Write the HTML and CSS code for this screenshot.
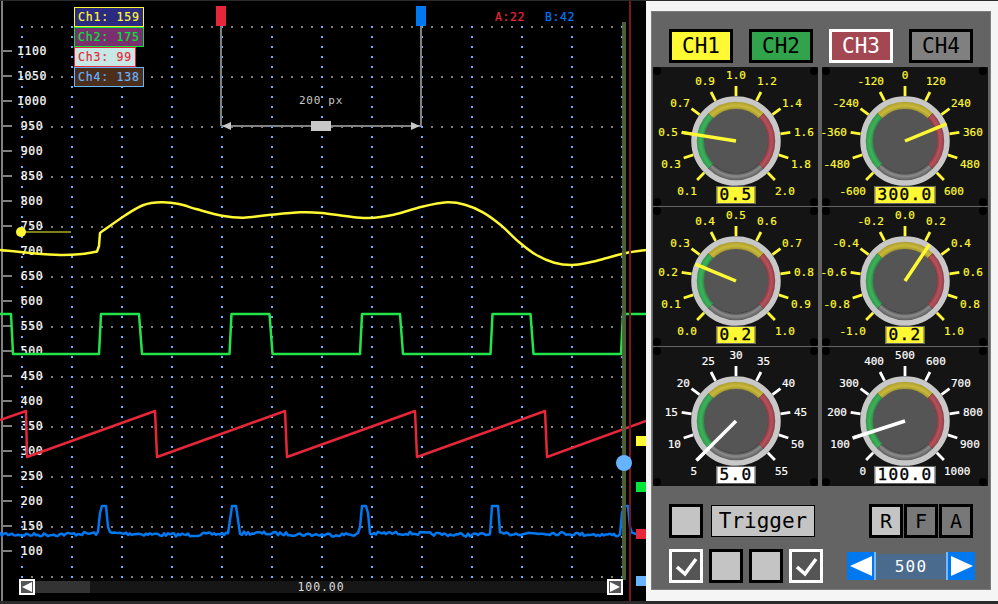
FILE: index.html
```html
<!DOCTYPE html>
<html lang="en">

<head>
    <meta charset="UTF-8">
    <title>Scope</title>
    <link rel="stylesheet" href="styles.css">
</head>

<body>
    <div class="app">
        <div class="scope">
            <svg id="plot" class="plot" viewBox="0 1 646 600" width="646" height="600"></svg>

            <div class="legend">
                <div class="legend-row ch1">Ch1: 159</div>
                <div class="legend-row ch2">Ch2: 175</div>
                <div class="legend-row ch3">Ch3: 99</div>
                <div class="legend-row ch4">Ch4: 138</div>
            </div>

            <div class="scrollbar">
                <button class="scroll-btn"><span class="tri-left"></span></button>
                <div class="scroll-track">
                    <div class="scroll-thumb"></div>
                    <span class="scroll-label">100.00</span>
                </div>
                <button class="scroll-btn"><span class="tri-right"></span></button>
            </div>
        </div>

        <div class="side">
            <div class="panel">
                <div class="channels">
                    <button class="ch-btn ch-yellow">CH1</button>
                    <button class="ch-btn ch-green">CH2</button>
                    <button class="ch-btn ch-red">CH3</button>
                    <button class="ch-btn ch-gray">CH4</button>
                </div>

                <div id="dials" class="dials"></div>

                <div class="controls">
                    <div class="control-row">
                        <button class="square"></button>
                        <button class="trigger">Trigger</button>
                        <div class="modes">
                            <button class="square mode">R</button>
                            <button class="square mode mode-off">F</button>
                            <button class="square mode mode-off">A</button>
                        </div>
                    </div>
                    <div class="control-row">
                        <div class="checks">
                            <button class="square checked">
                                <svg width="28" height="28"><polyline points="5,15 13,22 24,7" /></svg>
                            </button>
                            <button class="square"></button>
                            <button class="square"></button>
                            <button class="square checked">
                                <svg width="28" height="28"><polyline points="5,15 13,22 24,7" /></svg>
                            </button>
                        </div>
                        <div class="spinner">
                            <button class="spin-btn spin-prev"><span class="spin-left"></span></button>
                            <div class="spin-value">500</div>
                            <button class="spin-btn spin-next"><span class="spin-right"></span></button>
                        </div>
                    </div>
                </div>
            </div>
        </div>
    </div>
    <script src="script.js"></script>
</body>

</html>
```

FILE: styles.css
```css
/* Reset default margin and padding */
* {
    margin: 0;
    padding: 0;
    box-sizing: border-box;
}

body {
    width: 998px;
    height: 604px;
    overflow: hidden;
    background-color: #2b2b2b;
    font-family: "DejaVu Sans Mono", "Liberation Mono", monospace;
}

button {
    font-family: inherit;
}

.app {
    display: flex;
    height: 600px;
    margin-top: 1px;
}

/* Left side: the plot */
.scope {
    position: relative;
    width: 646px;
    background-color: #000;
}

.plot {
    display: block;
}

.plot text {
    font-family: "DejaVu Sans Mono", "Liberation Mono", monospace;
}

.axis-label {
    font-size: 11.5px;
    letter-spacing: 0.6px;
    fill: #fff;
    stroke: #fff;
    stroke-width: 0.2px;
}

.cursor-label {
    font-size: 11px;
    letter-spacing: 0.7px;
    fill: #c8c8c8;
}

.cursor-a {
    font-size: 11.5px;
    letter-spacing: 0.6px;
    fill: #e6273a;
    stroke: #e6273a;
    stroke-width: 0.2px;
}

.cursor-b {
    font-size: 11.5px;
    letter-spacing: 0.6px;
    fill: #0078f0;
    stroke: #0078f0;
    stroke-width: 0.2px;
}

.legend {
    position: absolute;
    left: 74px;
    top: 6px;
    display: flex;
    flex-direction: column;
    align-items: flex-start;
}

.legend-row {
    height: 20px;
    padding: 0 2px 0 3px;
    border: 1px solid;
    font-size: 11.5px;
    letter-spacing: 0.8px;
    line-height: 18px;
    white-space: pre;
    -webkit-text-stroke: 0.2px;
}

.ch1 {
    width: 70px;
    color: #fff933;
    border-color: #fff933;
    background-color: #2a2a80;
}

.ch2 {
    width: 70px;
    color: #00e639;
    border-color: #00e639;
    background-color: #7a2f6f;
}

.ch3 {
    width: 62px;
    color: #e6273a;
    border-color: #e6273a;
    background-color: #c8e8e6;
}

.ch4 {
    width: 70px;
    color: #66b3ff;
    border-color: #66b3ff;
    background-color: #4d2e1a;
}

.scrollbar {
    position: absolute;
    left: 19px;
    top: 578px;
    width: 604px;
    height: 16px;
    display: flex;
    align-items: center;
}

.scroll-btn {
    width: 16px;
    height: 16px;
    border: 2px solid #fff;
    background-color: #555;
    display: flex;
    align-items: center;
    justify-content: center;
    flex-shrink: 0;
}

.tri-left {
    border-top: 5px solid transparent;
    border-bottom: 5px solid transparent;
    border-right: 10px solid #fff;
}

.tri-right {
    border-top: 5px solid transparent;
    border-bottom: 5px solid transparent;
    border-left: 10px solid #fff;
}

.scroll-track {
    position: relative;
    flex: 1;
    height: 12px;
    background-color: #161616;
    display: flex;
    align-items: center;
    justify-content: center;
}

.scroll-thumb {
    position: absolute;
    left: 0;
    top: 0;
    width: 55px;
    height: 12px;
    background-color: #333;
}

.scroll-label {
    font-size: 11.5px;
    letter-spacing: 0.9px;
    color: #ddd;
}

/* Right side: the control panel */
.side {
    width: 352px;
    padding: 10px 7px 11px 5px;
    background-color: #f5f5f5;
}

.panel {
    height: 579px;
    border: 1px solid #7d7d7d;
    background-color: #646464;
}

.channels {
    display: flex;
    gap: 16px;
    padding: 17px 0 0 17px;
}

.ch-btn {
    width: 64px;
    height: 34px;
    border: 3px solid #000;
    font-size: 21px;
    color: #000;
}

.ch-yellow {
    background-color: #fff933;
}

.ch-green {
    background-color: #31a34a;
}

.ch-red {
    background-color: #a34852;
    border-color: #fff;
    color: #fff;
}

.ch-gray {
    background-color: #808080;
}

.dials {
    display: grid;
    grid-template-columns: 165px 166px;
    grid-auto-rows: 139px;
    column-gap: 4px;
    row-gap: 1px;
    margin: 4px 0 0 1px;
}

.dial {
    position: relative;
    background-color: #141414;
    overflow: hidden;
}

.dial svg {
    display: block;
}

.dial text {
    font-family: "DejaVu Sans Mono", "Liberation Mono", monospace;
    font-size: 11px;
    stroke-width: 0.2px;
}

.dial-value {
    position: absolute;
    left: 83px;
    bottom: 2px;
    transform: translateX(-50%);
    height: 18px;
    padding: 0 2px;
    border: 1px solid #666;
    font-size: 16px;
    letter-spacing: 1.4px;
    line-height: 16px;
    color: #000;
    white-space: nowrap;
    -webkit-text-stroke: 0.4px #000;
}

.dial-value.yellow {
    background-color: #fff933;
}

.dial-value.white {
    background-color: #fff;
}

.controls {
    display: flex;
    flex-direction: column;
    gap: 11px;
    margin-top: 18px;
    padding: 0 17px;
}

.control-row {
    display: flex;
    align-items: center;
    justify-content: space-between;
    height: 34px;
}

.control-row > .square {
    margin-right: 8px;
}

.square {
    width: 34px;
    height: 34px;
    border: 3px solid #000;
    background-color: #c4c4c4;
    flex-shrink: 0;
}

.trigger {
    width: 104px;
    height: 32px;
    border: 1px solid #000;
    background-color: #c4c4c4;
    font-size: 21px;
    color: #000;
    margin-right: auto;
}

.modes {
    display: flex;
    gap: 1px;
}

.mode {
    font-size: 20px;
    color: #000;
    line-height: 1;
}

.mode-off {
    background-color: #787878;
}

.checks {
    display: flex;
    gap: 6px;
}

.checked {
    border-color: #fff;
    background-color: #555;
}

.checked svg {
    display: block;
}

.checked polyline {
    fill: none;
    stroke: #fff;
    stroke-width: 3.5;
}

.spinner {
    display: flex;
    align-items: center;
    margin-right: -2px;
}

.spin-btn {
    width: 29px;
    height: 28px;
    border: none;
    background-color: #0078f0;
    display: flex;
    align-items: center;
    justify-content: center;
}

.spin-prev {
    border-right: 2px solid #7ab8f5;
}

.spin-next {
    border-left: 2px solid #7ab8f5;
}

.spin-left {
    border-top: 10px solid transparent;
    border-bottom: 10px solid transparent;
    border-right: 22px solid #fff;
}

.spin-right {
    border-top: 10px solid transparent;
    border-bottom: 10px solid transparent;
    border-left: 22px solid #fff;
}

.spin-value {
    width: 70px;
    height: 25px;
    background-color: #4a6a8e;
    font-size: 16px;
    letter-spacing: 1.2px;
    line-height: 25px;
    text-align: center;
    color: #fff;
}
```

FILE: script.js
```js
var NS = "http://www.w3.org/2000/svg";

function el(parent, name, attrs, text) {
    var node = document.createElementNS(NS, name);
    for (var key in attrs) node.setAttribute(key, attrs[key]);
    if (text !== undefined) node.textContent = text;
    parent.appendChild(node);
    return node;
}

// catmull-rom through the points, returned as path commands
function smooth(pts) {
    var d = "";
    for (var i = 0; i < pts.length - 1; i++) {
        var p0 = pts[Math.max(i - 1, 0)], p1 = pts[i];
        var p2 = pts[i + 1], p3 = pts[Math.min(i + 2, pts.length - 1)];
        d += " C" + (p1[0] + (p2[0] - p0[0]) / 6) + "," + (p1[1] + (p2[1] - p0[1]) / 6) +
            " " + (p2[0] - (p3[0] - p1[0]) / 6) + "," + (p2[1] - (p3[1] - p1[1]) / 6) +
            " " + p2[0] + "," + p2[1];
    }
    return d;
}

function drawGrid(svg) {
    var g = el(svg, "g", { "stroke-width": 2, "stroke-dasharray": "2 8" });
    for (var y = 27; y <= 577; y += 50) {
        el(g, "line", { x1: 21, x2: 614, y1: y, y2: y, stroke: "#808080" });
    }
    for (var x = 22; x <= 622; x += 50) {
        el(g, "line", { x1: x, x2: x, y1: 26, y2: 579, stroke: "#66b3ff" });
    }
}

function drawAxis(svg) {
    el(svg, "rect", { x: 1, y: 1, width: 2, height: 600, fill: "#808080" });
    for (var v = 1100, y = 51; v >= 100; v -= 50, y += 25) {
        el(svg, "rect", { x: 2, y: y - 1, width: 10, height: 2, fill: "#808080" });
        el(svg, "text", { x: 32, y: y + 4, "text-anchor": "middle", "class": "axis-label" }, v);
    }
}

function drawCursors(svg) {
    el(svg, "rect", { x: 220, y: 26, width: 2, height: 100, fill: "#808080" });
    el(svg, "rect", { x: 420, y: 26, width: 2, height: 100, fill: "#808080" });
    el(svg, "rect", { x: 216, y: 6, width: 10, height: 20, fill: "#e6273a" });
    el(svg, "rect", { x: 416, y: 6, width: 10, height: 20, fill: "#0078f0" });
    el(svg, "rect", { x: 221, y: 125, width: 200, height: 2, fill: "#808080" });
    el(svg, "polygon", { points: "222,126 231,122 231,130", fill: "#c8c8c8" });
    el(svg, "polygon", { points: "420,126 411,122 411,130", fill: "#c8c8c8" });
    el(svg, "rect", { x: 311, y: 121, width: 20, height: 10, fill: "#c8c8c8" });
    el(svg, "text", { x: 321, y: 104, "text-anchor": "middle", "class": "cursor-label" }, "200 px");
    el(svg, "text", { x: 495, y: 21, "class": "cursor-a" }, "A:22");
    el(svg, "text", { x: 545, y: 21, "class": "cursor-b" }, "B:42");
}

function drawTraces(svg) {
    var line = { fill: "none", "stroke-width": 2.5, "stroke-linejoin": "round" };

    // channel 1
    var left = [[0, 250], [30, 253], [60, 255], [82, 254], [97, 251.5]];
    var right = [[100, 233], [125.7, 215], [143.6, 205], [161.4, 202.3], [179, 204], [197, 209.3],
        [222, 215.7], [243.6, 217.7], [268.6, 215], [300.7, 212.3], [322, 213], [347, 216.3],
        [368.6, 218], [393.6, 214.7], [422, 206.7], [447, 202.3], [465, 204.7], [482.9, 212.3],
        [500.7, 225], [518.6, 241.7], [536.4, 255], [554.3, 262.7], [572, 265], [590, 262.3],
        [607.9, 257.7], [625.7, 253], [646, 250]];
    el(svg, "path", Object.assign({
        d: "M0,250" + smooth(left) + " L99,246 L100,233" + smooth(right),
        stroke: "#fff933"
    }, line));

    // channel 2, square wave
    var d2 = "M0,314 L11,314 L13,354";
    for (var x = 99; x < 646; x += 130.5) {
        d2 += " L" + x + ",354 L" + (x + 2) + ",314 L" + (x + 40) + ",314 L" + (x + 43) + ",354";
    }
    el(svg, "path", Object.assign({ d: d2, stroke: "#22e34a" }, line));

    // channel 3, sawtooth
    var d3 = "M0,420 L26,411 L27,457 ";
    for (var i = 0; i < 4; i++) {
        var start = 27 + i * 130;
        d3 += " L" + (start + 128) + ",411 L" + (start + 130) + ",457";
    }
    d3 += " L646,421";
    el(svg, "path", Object.assign({ d: d3, stroke: "#e6273a" }, line));

    // channel 4, noisy baseline with pulses
    var seed = 7;
    function rnd() {
        seed = (seed * 16807) % 2147483647;
        return seed / 2147483647;
    }
    var d4 = "";
    for (var px = 0; px <= 646; px += 2) {
        var y = 534 + (rnd() - 0.5) * 3.5 + Math.sin(px / 23) * 0.8;
        var phase = (px - 98.5 + 261) % 130.5;
        if (phase < 2) y = 534 - phase * 14;
        else if (phase < 8) y = 506;
        else if (phase < 10) y = 506 + (phase - 8) * 14;
        d4 += (d4 ? " L" : "M") + px + "," + y.toFixed(1);
    }
    el(svg, "path", Object.assign({ d: d4, stroke: "#0078f0" }, line));
}

function drawMarkers(svg) {
    el(svg, "rect", { x: 622, y: 22, width: 4, height: 558, fill: "#4f6338", "fill-opacity": 0.95 });
    el(svg, "rect", { x: 629, y: 1, width: 2, height: 600, fill: "#7c1520" });

    // channel 1 offset handle
    el(svg, "rect", { x: 21, y: 231, width: 50, height: 2, fill: "#80801a" });
    el(svg, "circle", { cx: 21, cy: 232, r: 5, fill: "#fff933" });
    el(svg, "circle", { cx: 624, cy: 463, r: 8, fill: "#66b3ff" });

    var marks = [[436, "#fff933"], [482, "#00e639"], [529, "#e6273a"], [576, "#66b3ff"]];
    marks.forEach(function (m) {
        el(svg, "rect", { x: 636, y: m[0], width: 10, height: 10, fill: m[1] });
    });
}

var plot = document.getElementById("plot");
drawGrid(plot);
drawAxis(plot);
drawTraces(plot);
drawCursors(plot);
drawMarkers(plot);

// shared ring colours, in the local coordinates of a dial
var rings = {
    green: ["#2f8a48", "#3cb35a", "#33934c"],
    yellow: ["#a39630", "#c9b93a", "#a89a30"],
    red: ["#8a3a42", "#b5525c", "#8f3e46"],
    gray: ["#444", "#8c8c8c", "#555"]
};

function arcPath(r, from, to) {
    var a = from * Math.PI / 180, b = to * Math.PI / 180;
    return "M" + r * Math.sin(a) + "," + -r * Math.cos(a) +
        " A" + r + "," + r + " 0 0 1 " + r * Math.sin(b) + "," + -r * Math.cos(b);
}

// label offsets for each tick, right half; the left half is mirrored
var labelPos = [[0, -66], [21, -60], [46, -38], [58, -9], [55, 23], [39, 50]];

function addDial(parent, d) {
    var card = document.createElement("div");
    card.className = "dial";
    parent.appendChild(card);

    var svg = el(card, "svg", { width: "100%", height: 139 });
    var defs = el(svg, "defs", {});
    Object.keys(rings).forEach(function (name) {
        var id = d.id + name;
        var grad = el(defs, "radialGradient", { id: id, gradientUnits: "userSpaceOnUse", cx: 0, cy: 0, r: 40 });
        el(grad, "stop", { offset: 0.8, "stop-color": rings[name][0] });
        el(grad, "stop", { offset: 0.88, "stop-color": rings[name][1] });
        el(grad, "stop", { offset: 1, "stop-color": rings[name][2] });
    });

    // screws in the corners
    [[4, 4], [161, 4], [4, 135], [161, 135]].forEach(function (s) {
        el(svg, "circle", { cx: s[0], cy: s[1], r: 4, fill: "#000" });
    });

    var g = el(svg, "g", { transform: "translate(83,74)" });

    d.labels.forEach(function (label, i) {
        var angle = -135 + i * 27;
        var rad = angle * Math.PI / 180;
        el(g, "line", {
            x1: 45 * Math.sin(rad), y1: -45 * Math.cos(rad),
            x2: 55 * Math.sin(rad), y2: -55 * Math.cos(rad),
            stroke: d.color, "stroke-width": 2.8
        });
        var pos = labelPos[Math.abs(i - 5)];
        el(g, "text", {
            x: i < 5 ? -pos[0] : pos[0],
            y: pos[1] + 4,
            "text-anchor": i === 5 ? "middle" : (i < 5 ? "end" : "start"),
            fill: d.color,
            stroke: d.color
        }, label);
    });

    el(g, "circle", { r: 32.5, fill: "#555" });
    el(g, "path", { d: arcPath(36, -135, -45), fill: "none", "stroke-width": 8, stroke: "url(#" + d.id + "green)" });
    el(g, "path", { d: arcPath(36, -45, 45), fill: "none", "stroke-width": 8, stroke: "url(#" + d.id + "yellow)" });
    el(g, "path", { d: arcPath(36, 45, 135), fill: "none", "stroke-width": 8, stroke: "url(#" + d.id + "red)" });
    el(g, "path", { d: arcPath(36, 135, 225), fill: "none", "stroke-width": 8, stroke: "url(#" + d.id + "gray)" });
    el(g, "circle", { r: 42, fill: "none", stroke: "#c8c8c8", "stroke-width": 5.5 });

    var a = d.angle * Math.PI / 180;
    el(g, "line", {
        x1: 0, y1: 0,
        x2: d.needle * Math.sin(a), y2: -d.needle * Math.cos(a),
        stroke: d.color, "stroke-width": 3.5
    });

    var value = document.createElement("div");
    value.className = "dial-value " + d.box;
    value.textContent = d.value;
    card.appendChild(value);
}

var yellow = "#fff933";
var dials = [
    { id: "d1", color: yellow, box: "yellow", value: "0.5", angle: -81, needle: 55,
        labels: ["0.1", "0.3", "0.5", "0.7", "0.9", "1.0", "1.2", "1.4", "1.6", "1.8", "2.0"] },
    { id: "d2", color: yellow, box: "yellow", value: "300.0", angle: 67.5, needle: 45,
        labels: ["-600", "-480", "-360", "-240", "-120", "0", "120", "240", "360", "480", "600"] },
    { id: "d3", color: yellow, box: "yellow", value: "0.2", angle: -67.5, needle: 44,
        labels: ["0.0", "0.1", "0.2", "0.3", "0.4", "0.5", "0.6", "0.7", "0.8", "0.9", "1.0"] },
    { id: "d4", color: yellow, box: "yellow", value: "0.2", angle: 33.75, needle: 44,
        labels: ["-1.0", "-0.8", "-0.6", "-0.4", "-0.2", "0.0", "0.2", "0.4", "0.6", "0.8", "1.0"] },
    { id: "d5", color: "#fff", box: "white", value: "5.0", angle: -135, needle: 56,
        labels: ["5", "10", "15", "20", "25", "30", "35", "40", "45", "50", "55"] },
    { id: "d6", color: "#fff", box: "white", value: "100.0", angle: -108, needle: 55,
        labels: ["0", "100", "200", "300", "400", "500", "600", "700", "800", "900", "1000"] }
];

var holder = document.getElementById("dials");
dials.forEach(function (d) { addDial(holder, d); });
```
